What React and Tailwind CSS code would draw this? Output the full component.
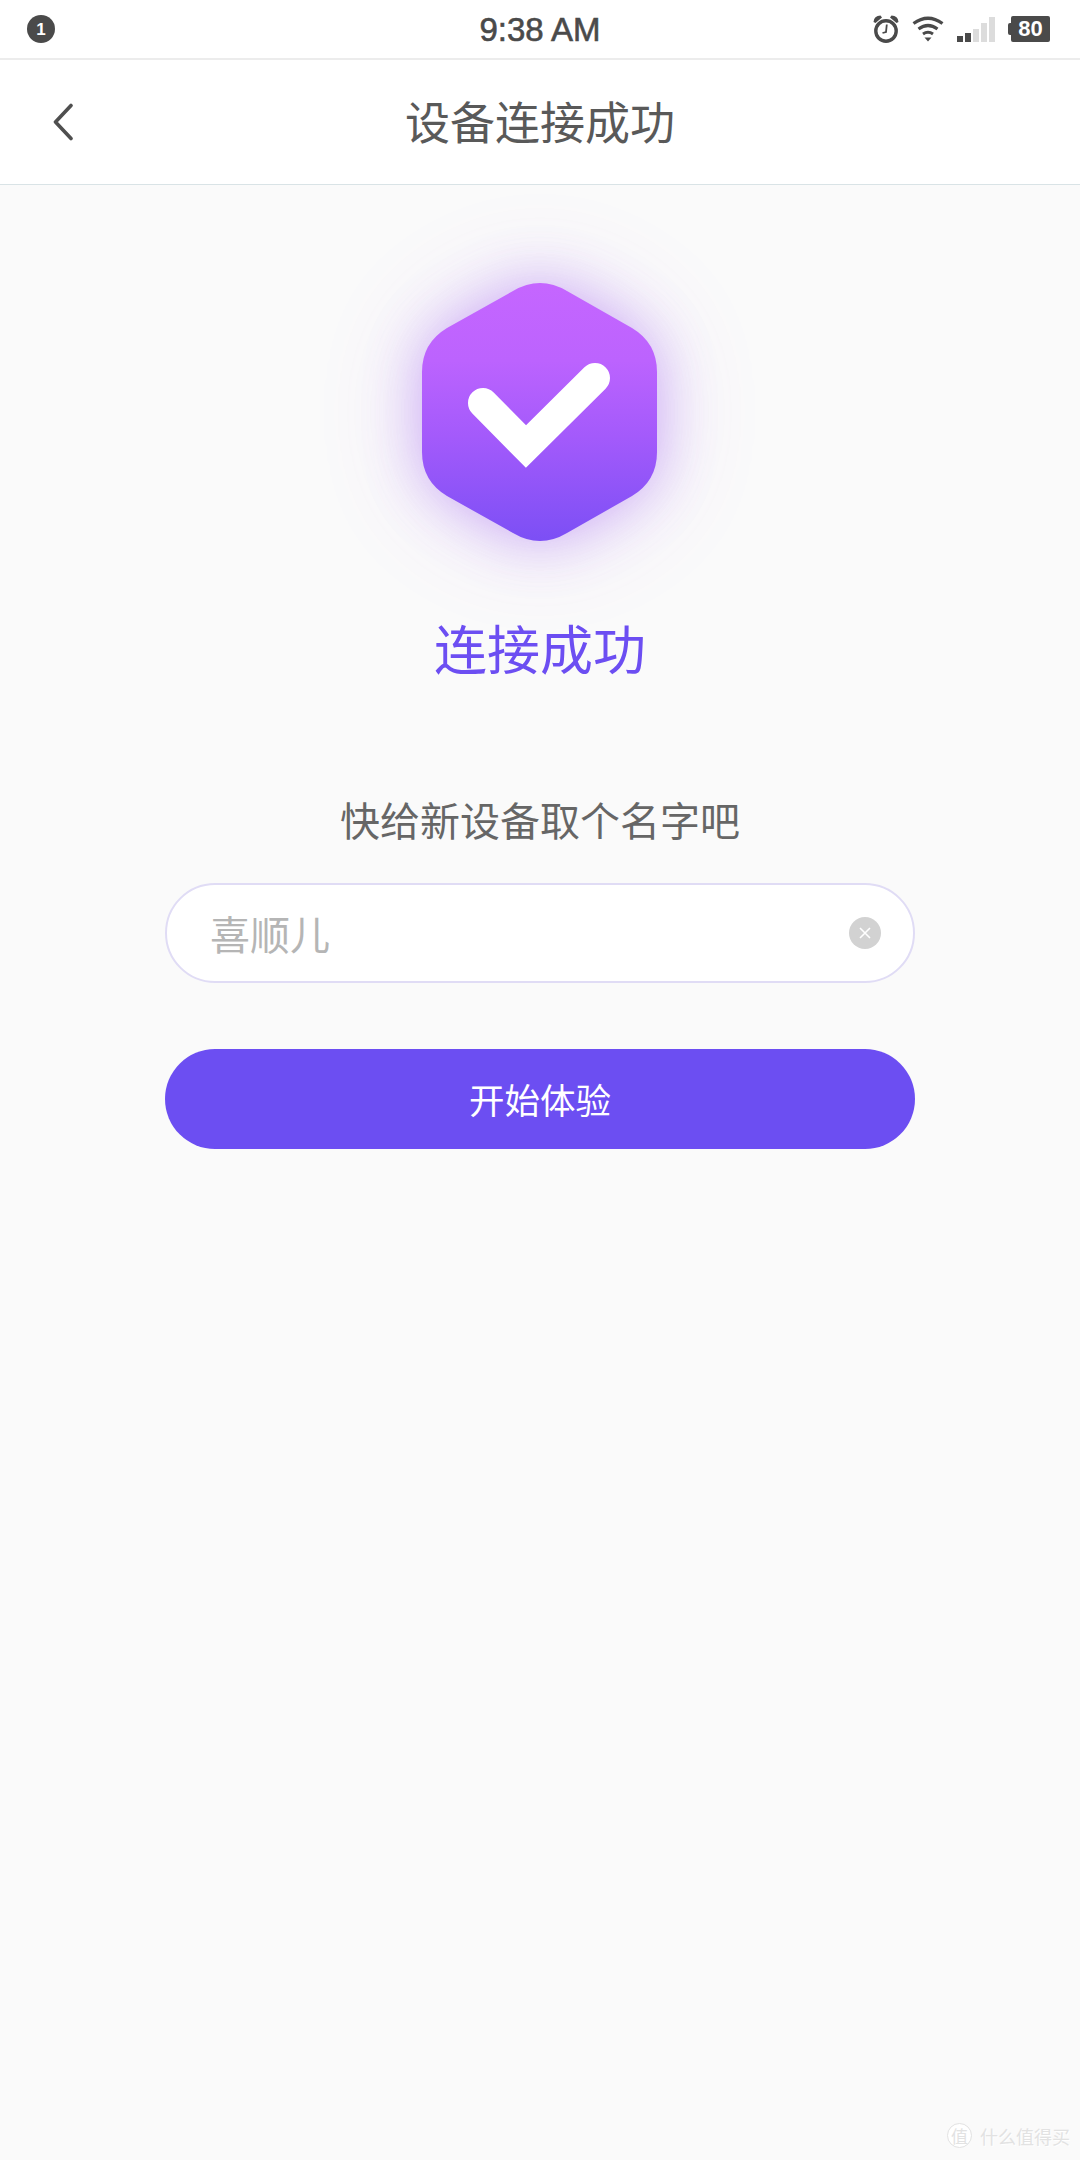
const FONT = "font-['Noto_Sans_CJK_SC',sans-serif]";
const HEX = "M513 291Q540 275 567 291L632 328Q657 343 657 372L657 452Q657 481 632 496L567 533Q540 549 513 533L447 496Q422 481 422 452L422 372Q422 343 447 328Z";

function Alarm() {
  return (
    <svg width="26" height="28" viewBox="0 0 26 28" className="block">
      <circle cx="13" cy="16" r="10.2" fill="none" stroke="#4a4a4a" strokeWidth="3.4" />
      <path d="M0.5 7Q1 0.5 7.5 0.5L9 2.5L2.5 8Z M25.5 7Q25 0.5 18.5 0.5L17 2.5L23.5 8Z" fill="#4a4a4a" />
      <path d="M13.8 9.5L13 17L9.5 18" fill="none" stroke="#4a4a4a" strokeWidth="1.8" />
    </svg>
  );
}

function Wifi() {
  return (
    <svg width="32" height="26" viewBox="0 0 32 26" className="block">
      <path d="M1.5 7.5Q16 -3 30.5 7.5" fill="none" stroke="#4a4a4a" strokeWidth="3.2" />
      <path d="M6.5 13Q16 6 25.5 13" fill="none" stroke="#4a4a4a" strokeWidth="3.2" />
      <path d="M11 18Q16 14.5 21 18" fill="none" stroke="#4a4a4a" strokeWidth="3" />
      <path d="M12.5 21.5H19.5L16 25.5Z" fill="#4a4a4a" />
    </svg>
  );
}

function Signal() {
  const bars = [
    ["h-[6px]", "bg-[#4a4a4a]"],
    ["h-[9px]", "bg-[#4a4a4a]"],
    ["h-[13px]", "bg-[#dcdcdc]"],
    ["h-[19px]", "bg-[#dcdcdc]"],
    ["h-[25px]", "bg-[#dcdcdc]"],
  ];
  return (
    <div className="flex items-end gap-[2px] h-[26px]">
      {bars.map(([h, c], i) => (
        <div key={i} className={`w-[6px] ${h} ${c}`} />
      ))}
    </div>
  );
}

function Battery() {
  return (
    <div className="flex items-center">
      <div className="w-[3px] h-[12px] bg-[#4a4a4a] rounded-l-[2px]" />
      <div className="w-[39px] h-[26px] bg-[#4a4a4a] rounded-[2px] flex items-center justify-center text-white text-[22px] font-bold leading-none font-['Liberation_Sans',sans-serif]">
        80
      </div>
    </div>
  );
}

function StatusBar() {
  return (
    <div className="h-[60px] bg-white border-b-2 border-[#ececec] grid grid-cols-3 items-center">
      <div className="pl-[27px]">
        <div className="w-[28px] h-[28px] rounded-full bg-[#4a4a4a] text-white flex items-center justify-center text-[17px] font-bold leading-none font-['Liberation_Sans',sans-serif]">
          1
        </div>
      </div>
      <div className="text-center text-[33px] leading-none text-[#4a4a4a] font-['Liberation_Sans',sans-serif] [-webkit-text-stroke:0.6px_#4a4a4a]">
        9:38 AM
      </div>
      <div className="flex items-center justify-end gap-[13px] pr-[30px]">
        <Alarm />
        <Wifi />
        <Signal />
        <Battery />
      </div>
    </div>
  );
}

function NavBar() {
  return (
    <div className="h-[125px] bg-white border-b border-[#d9e3e6] grid grid-cols-3 items-center">
      <div className="pl-[53px]">
        <svg width="20" height="38" viewBox="0 0 20 38" className="block">
          <path d="M18 2.5L2.5 19L18 35.5" fill="none" stroke="#4f4f4f" strokeWidth="3.6" strokeLinecap="round" strokeLinejoin="round" />
        </svg>
      </div>
      <div className={`text-center text-[45px] leading-[58px] pb-[2px] text-[#595959] whitespace-nowrap ${FONT}`}>
        设备连接成功
      </div>
      <div />
    </div>
  );
}

function Logo() {
  return (
    <svg width="480" height="420" viewBox="300 185 480 420" className="block overflow-visible">
      <defs>
        <linearGradient id="hexFill" x1="0" y1="0" x2="0" y2="1">
          <stop offset="0" stopColor="#c566ff" />
          <stop offset="0.3" stopColor="#bc63fe" />
          <stop offset="0.6" stopColor="#a35afb" />
          <stop offset="1" stopColor="#7c4ff5" />
        </linearGradient>
        <filter id="glowNear" x="-60%" y="-60%" width="220%" height="220%">
          <feGaussianBlur stdDeviation="29" />
        </filter>
        <filter id="glowFar" x="-90%" y="-90%" width="280%" height="280%">
          <feGaussianBlur stdDeviation="52" />
        </filter>
      </defs>
      <path d={HEX} fill="#9550ee" opacity="0.2" filter="url(#glowFar)" />
      <path d={HEX} fill="#9550ee" opacity="0.38" filter="url(#glowNear)" />
      <path d={HEX} fill="url(#hexFill)" />
      <path d="M483 403L526 446.5L595 378" fill="none" stroke="#ffffff" strokeWidth="30" strokeLinecap="round" strokeLinejoin="miter" />
    </svg>
  );
}

function Watermark() {
  return (
    <div className="absolute right-[10px] bottom-[12px] flex items-center gap-[8px] text-[#e2e2e2]">
      <div className={`w-[25px] h-[25px] rounded-full border border-[#e2e2e2] bg-white flex items-center justify-center text-[17px] leading-none ${FONT}`}>
        值
      </div>
      <div className={`text-[18px] leading-none ${FONT} [text-shadow:1px_1px_0_#ffffff]`}>什么值得买</div>
    </div>
  );
}

export default function App() {
  return (
    <div className="relative w-[1080px] h-[2160px] bg-[#fafafa] overflow-hidden">
      <StatusBar />
      <NavBar />
      <main className="flex flex-col items-center">
        <Logo />
        <h1 className={`mt-[12px] text-[53px] leading-[60px] font-normal text-[#6c4ef2] ${FONT}`}>连接成功</h1>
        <p className={`mt-[114px] text-[40px] leading-[56px] text-[#666666] ${FONT}`}>快给新设备取个名字吧</p>
        <div className="mt-[36px] w-[750px] h-[100px] box-border rounded-full border-2 border-[#e0dcf5] bg-white flex items-center justify-between pl-[43px] pr-[32px]">
          <span className={`text-[40px] leading-[56px] text-[#b5b5b5] ${FONT}`}>喜顺儿</span>
          <span className="w-[32px] h-[32px] rounded-full bg-[#d2d2d2] flex items-center justify-center">
            <svg width="14" height="14" viewBox="0 0 14 14" className="block">
              <path d="M2 2L12 12M12 2L2 12" stroke="#ffffff" strokeWidth="1.6" />
            </svg>
          </span>
        </div>
        <button className={`mt-[66px] w-[750px] h-[100px] rounded-full bg-[#6c4ef2] text-white text-[35.5px] leading-none ${FONT}`}>
          开始体验
        </button>
      </main>
      <Watermark />
    </div>
  );
}
